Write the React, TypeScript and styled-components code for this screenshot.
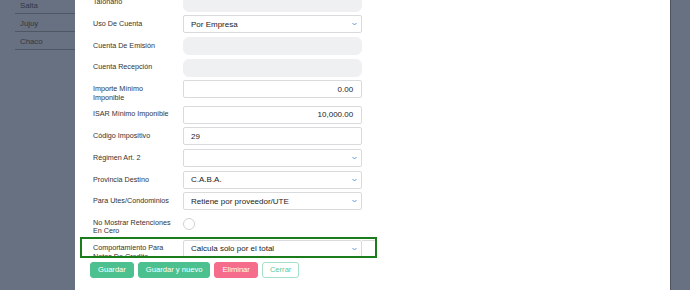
import { JSX } from "react";
import styled, { createGlobalStyle } from "styled-components";

const colors = {
    overlay: "#687181",
    sideLine: "#4f5664",
    sideText: "#323842",
    label: "#333",
    text: "#222",
    border: "#d9dadc",
    disabled: "#eef0f2",
    chevron: "#4a8fd8",
    green: "#4cc18f",
    pink: "#f66d8b",
    outline: "#1b7c1b",
};

const GlobalStyle = createGlobalStyle`
    body {
        margin: 0;
        background: ${colors.overlay};
        font-family: "Liberation Sans", Arial, sans-serif;
    }
`;

const Page = styled.div`
    position: relative;
    display: flex;
    width: 690px;
    height: 290px;
    overflow: hidden;
    background: ${colors.overlay};
`;

const Sidebar = styled.div`
    width: 75px;
    flex: none;
    box-sizing: border-box;
    padding-left: 15px;
    margin-top: -3.7px;
`;

const SideItem = styled.div`
    height: 18px;
    box-sizing: border-box;
    padding: 1px 0 0 5px;
    line-height: 17px;
    font-size: 7.8px;
    color: ${colors.sideText};
    border-bottom: 1px solid ${colors.sideLine};
`;

const Modal = styled.div`
    width: 595px;
    height: 290px;
    flex: none;
    display: flex;
    flex-direction: column;
    background: #fff;
    box-shadow: 1px 0 0 #4c5361;
`;

const Body = styled.div`
    height: 257px;
    flex: none;
    overflow: hidden;
    padding-left: 18px;
`;

const Form = styled.div`
    margin-top: -6.5px;
`;

const Row = styled.div`
    display: flex;
    align-items: flex-start;
    margin-bottom: 3.7px;
`;

const Label = styled.div`
    width: 89.7px;
    flex: none;
    box-sizing: border-box;
    padding: 4.75px 9px 0 0;
    line-height: 8.5px;
    font-size: 7.2px;
    color: ${colors.label};
`;

const Field = styled.div<{ $disabled?: boolean; $right?: boolean; $select?: boolean }>`
    width: 179px;
    height: 18px;
    flex: none;
    box-sizing: border-box;
    display: flex;
    align-items: center;
    justify-content: ${p => (p.$right ? "flex-end" : "space-between")};
    padding: 0 ${p => (p.$select ? "4px" : "7.5px")} 0 7.3px;
    font-size: 8px;
    color: ${colors.text};
    background: ${p => (p.$disabled ? colors.disabled : "#fff")};
    border: 1px solid ${p => (p.$disabled ? colors.disabled : colors.border)};
    border-radius: ${p => (p.$disabled ? "6px" : "2px")};
`;

const Addon = styled.div`
    width: 15px;
    height: 18px;
    flex: none;
    box-sizing: border-box;
    border: 1px solid ${colors.border};
    border-left: none;
    border-radius: 0 2px 2px 0;
`;

const Radio = styled.div`
    width: 12px;
    height: 12px;
    margin-top: 3.5px;
    box-sizing: border-box;
    border: 1px solid #cfd1d4;
    border-radius: 50%;
`;

const Highlight = styled.div`
    position: absolute;
    left: 80px;
    top: 237px;
    width: 297px;
    height: 21px;
    box-sizing: border-box;
    border: 2px solid ${colors.outline};
    pointer-events: none;
`;

const Footer = styled.div`
    display: flex;
    gap: 4px;
    padding: 4.5px 0 0 15px;
`;

const Button = styled.button<{ $kind: "green" | "pink" | "outline" }>`
    height: 16.5px;
    box-sizing: border-box;
    padding: 0 7px;
    font-family: inherit;
    font-size: 7.6px;
    line-height: 1;
    border-radius: 3px;
    border: 1px solid ${p => p.$kind === "pink" ? colors.pink : p.$kind === "green" ? colors.green : "#a6e1c7"};
    background: ${p => p.$kind === "pink" ? colors.pink : p.$kind === "green" ? colors.green : "#fff"};
    color: ${p => (p.$kind === "outline" ? "#5ccb9b" : "#fff")};
`;

function Chevron() {
    return <svg width="5" height="4" viewBox="0 0 5 4">
        <polyline points="0.5,1 2.5,3 4.5,1" fill="none" stroke={colors.chevron} strokeWidth="0.9" />
    </svg>;
}

interface FieldRow {
    label: string;
    value?: string;
    kind: "disabled" | "select" | "text" | "number";
}

const rows: FieldRow[] = [
    { label: "Talonario", kind: "disabled" },
    { label: "Uso De Cuenta", value: "Por Empresa", kind: "select" },
    { label: "Cuenta De Emisión", kind: "disabled" },
    { label: "Cuenta Recepción", kind: "disabled" },
    { label: "Importe Mínimo Imponible", value: "0.00", kind: "number" },
    { label: "ISAR Mínimo Imponible", value: "10,000.00", kind: "number" },
    { label: "Código Impositivo", value: "29", kind: "text" },
    { label: "Régimen Art. 2", value: "", kind: "select" },
    { label: "Provincia Destino", value: "C.A.B.A.", kind: "select" },
    { label: "Para Utes/Condominios", value: "Retiene por proveedor/UTE", kind: "select" },
];

function renderField(row: FieldRow) {
    return <Field
        $disabled={row.kind === "disabled"}
        $right={row.kind === "number"}
        $select={row.kind === "select"}
    >
        {row.kind !== "disabled" && <span>{row.value}</span>}
        {row.kind === "select" && <Chevron />}
    </Field>;
}

export default function App(): JSX.Element {
    return <>
        <GlobalStyle />
        <Page>
            <Sidebar>
                <SideItem>Salta</SideItem>
                <SideItem>Jujuy</SideItem>
                <SideItem>Chaco</SideItem>
            </Sidebar>
            <Modal>
                <Body>
                    <Form>
                        {rows.map(row => <Row key={row.label}>
                            <Label>{row.label}</Label>
                            {renderField(row)}
                        </Row>)}
                        <Row>
                            <Label>No Mostrar Retenciones En Cero</Label>
                            <Radio />
                        </Row>
                        <Row>
                            <Label>Comportamiento Para Notas De Credito</Label>
                            <Field $select>
                                <span>Calcula solo por el total</span>
                                <Chevron />
                            </Field>
                            <Addon />
                        </Row>
                    </Form>
                </Body>
                <Footer>
                    <Button $kind="green">Guardar</Button>
                    <Button $kind="green">Guardar y nuevo</Button>
                    <Button $kind="pink">Eliminar</Button>
                    <Button $kind="outline">Cerrar</Button>
                </Footer>
            </Modal>
            <Highlight />
        </Page>
    </>;
}
